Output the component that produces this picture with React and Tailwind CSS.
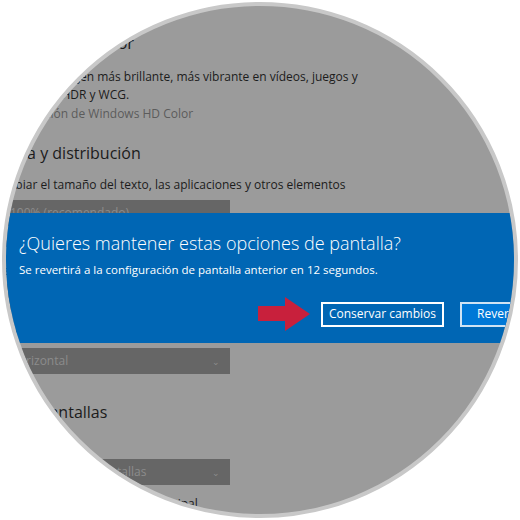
import React from 'react';

const font = { fontFamily: '"Open Sans", "Noto Sans", sans-serif' };

function Dropdown({ label, className = '' }) {
  return (
    <div className={`w-[240px] h-[26px] bg-[#666666] flex items-center justify-between pl-[20px] pr-[10px] ${className}`}>
      <span className="text-[12px] text-[#8c8c8c] leading-none whitespace-nowrap">{label}</span>
      <span className="text-[9px] text-[#8c8c8c] leading-none">⌄</span>
    </div>
  );
}

function Arrow() {
  return (
    <svg width="52" height="34" viewBox="0 0 52 34" className="shrink-0">
      <polygon points="0,9 27,9 27,0 52,17 27,34 27,24 0,24" fill="#c8203c" />
    </svg>
  );
}

export default function App() {
  return (
    <div className="w-[520px] h-[520px] bg-white overflow-hidden" style={font}>
      <div className="ml-[2px] mt-[2px] w-[516px] h-[516px] rounded-full border-4 border-[#c8c8c8] bg-[#9b9b9b] overflow-hidden relative">
        {/* dimmed settings page */}
        <div className="ml-[-16px] pt-[25px] flex flex-col text-[#1c1c1c]">
          <h2 className="text-[16.5px] leading-[24px] whitespace-nowrap">Windows HD Color</h2>
          <p className="mt-[13px] text-[12px] leading-[18px] w-[374px]">
            Obtén una imagen más brillante, más vibrante en vídeos, juegos y aplicaciones HDR y WCG.
          </p>
          <a className="mt-[1px] text-[12px] leading-[18px] text-[#5c5c5c] whitespace-nowrap">Configuración de Windows HD Color</a>

          <h2 className="mt-[18px] text-[16px] leading-[24px] whitespace-nowrap">Escala y distribución</h2>
          <p className="mt-[11px] text-[12px] leading-[18px] whitespace-nowrap">
            Cambiar el tamaño del texto, las aplicaciones y otros elementos
          </p>
          <Dropdown label="100% (recomendado)" className="mt-[6px]" />
          <a className="mt-[8px] text-[12px] leading-[18px] text-[#5c5c5c] whitespace-nowrap">Configuración de escala avanzada</a>
          <p className="mt-[10px] text-[12px] leading-[18px]">Resolución</p>
          <Dropdown label="1920 × 1080 (recomendado)" className="mt-[4px]" />
          <p className="mt-[14px] text-[12px] leading-[18px]">Orientación</p>
          <Dropdown label="Horizontal" className="mt-[6px]" />

          <h2 className="mt-[26px] text-[16px] leading-[24px] whitespace-nowrap">Varias pantallas</h2>
          <Dropdown label="Extender estas pantallas" className="mt-[35px]" />
          <div className="mt-[10px] flex items-center gap-[8px] h-[18px]">
            <span className="w-[18px] h-[18px] border-2 border-[#1c1c1c] shrink-0"></span>
            <span className="text-[12px] leading-[18px] whitespace-nowrap">Convertir en la pantalla principal</span>
          </div>
        </div>

        {/* dialog band */}
        <div className="absolute left-0 right-0 top-[207px] h-[130px] bg-[#0066b4] text-white pl-[13px] pt-[16px]">
          <h1 className="text-[18px] leading-[28px] font-light whitespace-nowrap">
            ¿Quieres mantener estas opciones de pantalla?
          </h1>
          <p className="mt-[4px] text-[11.5px] leading-[18px] whitespace-nowrap">
            Se revertirá a la configuración de pantalla anterior en 12 segundos.
          </p>
          <div className="mt-[18px] flex items-center ml-[239px]">
            <Arrow />
            <button className="shrink-0 ml-[11px] w-[123px] h-[25px] border-2 border-white bg-[#0066b4] text-[12px] leading-none text-white whitespace-nowrap">
              Conservar cambios
            </button>
            <button className="shrink-0 ml-[16px] h-[25px] px-[15px] border-2 border-[#cfe3f4] bg-[#0078d7] text-[12px] leading-none text-white whitespace-nowrap">
              Revertir
            </button>
          </div>
        </div>
      </div>
    </div>
  );
}
